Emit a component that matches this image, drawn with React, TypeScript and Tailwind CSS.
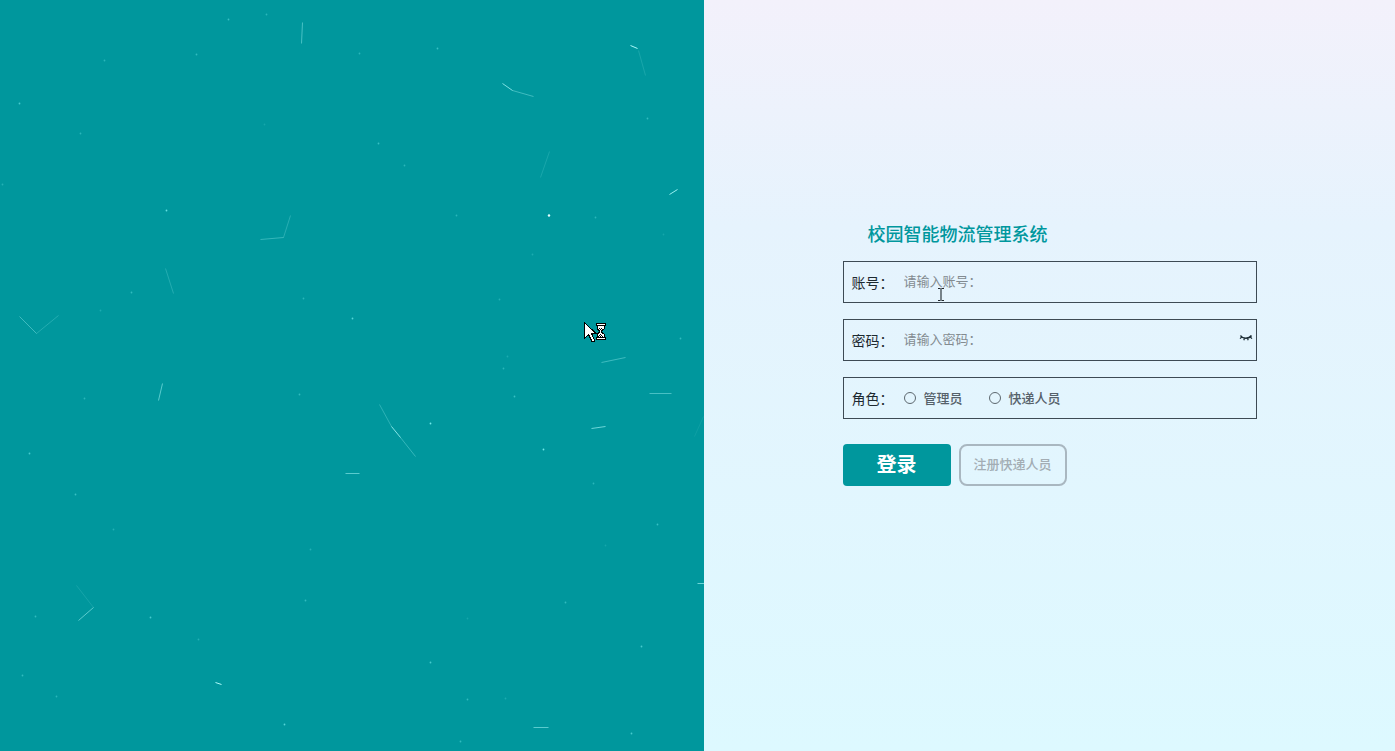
import { useState } from "react";

// [x, y, opacity]
const DOTS = [
  [228, 19, 0.4], [266, 14, 0.3], [104, 60, 0.3], [196, 54, 0.35], [359, 53, 0.3],
  [437, 48, 0.4], [19, 103, 0.5], [80, 133, 0.3], [378, 143, 0.4], [404, 165, 0.3],
  [264, 124, 0.15], [2, 184, 0.25], [166, 210, 0.7], [647, 118, 0.35], [456, 215, 0.3],
  [595, 217, 0.3], [663, 234, 0.15], [131, 292, 0.35], [100, 310, 0.2], [303, 298, 0.3],
  [352, 318, 0.6], [84, 398, 0.3], [299, 394, 0.35], [29, 453, 0.5], [75, 494, 0.4],
  [499, 299, 0.25], [532, 254, 0.2], [680, 338, 0.35], [507, 356, 0.2], [503, 368, 0.3],
  [514, 396, 0.4], [430, 423, 0.8], [543, 449, 0.8], [593, 483, 0.3], [657, 524, 0.4],
  [605, 545, 0.15], [113, 529, 0.25], [310, 549, 0.25], [305, 600, 0.35], [35, 616, 0.35],
  [150, 617, 0.5], [198, 639, 0.25], [22, 675, 0.35], [56, 696, 0.3], [284, 724, 0.6],
  [565, 602, 0.35], [467, 618, 0.15], [641, 646, 0.5], [430, 662, 0.5], [467, 699, 0.35],
  [505, 698, 0.2], [631, 733, 0.5], [460, 741, 0.35],
];

// [x1, y1, x2, y2, opacity]
const LINES = [
  [302, 22, 301, 43, 0.4], [260, 239, 283, 237, 0.3], [283, 237, 290, 215, 0.22],
  [502, 83, 512, 90, 0.7], [512, 90, 533, 96, 0.35], [630, 45, 637, 48, 0.95],
  [638, 50, 645, 75, 0.14], [540, 177, 549, 151, 0.14], [669, 194, 677, 189, 0.85],
  [165, 268, 173, 293, 0.2], [19, 316, 36, 333, 0.35], [36, 333, 58, 315, 0.2],
  [162, 383, 158, 400, 0.5], [379, 404, 391, 426, 0.25], [391, 426, 400, 437, 0.75],
  [400, 437, 415, 456, 0.3], [345, 473, 359, 473, 0.5], [601, 362, 625, 357, 0.35],
  [649, 393, 671, 393, 0.4], [591, 428, 605, 426, 0.6], [703, 416, 694, 436, 0.08],
  [76, 585, 93, 607, 0.12], [93, 607, 78, 620, 0.5], [215, 682, 221, 684, 0.95],
  [533, 727, 548, 727, 0.5], [697, 583, 704, 583, 0.6],
];

const HOURGLASS = [
  "##########",
  "#oooooooo#",
  "##########",
  ".#oooooo#.",
  ".#oooooo#.",
  ".#o#o#oo#.",
  ".##o#o##..",
  "..##o##...",
  "...#o#....",
  "..##o##...",
  ".##ooo##..",
  ".#oo#ooo#.",
  ".#o#o#oo#.",
  ".##o#o#o#.",
  "##########",
  "#oooooooo#",
  "##########",
];

function Particles() {
  return (
    <svg className="absolute inset-0 w-full h-full" aria-hidden="true">
      <g stroke="#b4ffff" fill="none">
        {LINES.map(([x1, y1, x2, y2, o], i) => (
          <line key={i} x1={x1 + 0.5} y1={y1 + 0.5} x2={x2 + 0.5} y2={y2 + 0.5} opacity={o} />
        ))}
      </g>
      <g fill="#8cffff">
        {DOTS.map(([x, y, o], i) => (
          <circle key={i} cx={x + 0.5} cy={y + 0.5} r="0.9" opacity={o} />
        ))}
        <circle cx="549" cy="215.5" r="1.2" fill="#e6ffff" />
      </g>
    </svg>
  );
}

function BusyCursor() {
  return (
    <svg
      className="absolute left-[584px] top-[321px]"
      width="24"
      height="22"
      viewBox="0 0 24 22"
      shapeRendering="crispEdges"
      aria-hidden="true"
    >
      <path d="M0.5 1.5V17.5L4.5 13.5L8 20.5H10L10.5 19L7.5 12.5H12Z" fill="#fff" stroke="#000" />
      {HOURGLASS.map((row, y) =>
        row.split("").map((p, x) =>
          p === "." ? null : (
            <rect
              key={`${x}-${y}`}
              x={x + 12}
              y={y + 2}
              width="1"
              height="1"
              fill={p === "#" ? "#000" : "#fff"}
            />
          )
        )
      )}
    </svg>
  );
}

function TextCursor() {
  return (
    <svg
      className="absolute left-[93px] top-[26px] pointer-events-none"
      width="8"
      height="13"
      viewBox="0 0 8 13"
      aria-hidden="true"
    >
      <path d="M1 0.5H3.5M4.5 0.5H7M1 12.5H3.5M4.5 12.5H7" stroke="#20262b" />
      <path d="M4 0.5V12.5" stroke="#3a444b" strokeWidth="1.3" />
    </svg>
  );
}

function ClosedEye() {
  return (
    <svg width="14" height="10" viewBox="0 0 14 10" fill="none" stroke="#1b2b33" aria-hidden="true">
      <path d="M1.5 2.5C3.5 6 10 6 12.5 2.5" strokeWidth="1.5" />
      <path d="M2.8 4L1 5.6M5.5 5.2L4.8 7.2M8.5 5.2L9.2 7.2M11.2 4L13 5.6" strokeWidth="1.2" />
    </svg>
  );
}

const rowClass = "relative flex items-center h-[42px] border border-[#3d4a54] pl-2";
const labelClass = "w-[52px] shrink-0 text-[14px] text-[#1d2930]";
const inputClass =
  "flex-1 min-w-0 h-full pb-1 bg-transparent text-[13px] text-[#303133] placeholder:text-[#838b90] outline-none";

export default function App() {
  const [account, setAccount] = useState("");
  const [password, setPassword] = useState("");
  const [showPassword, setShowPassword] = useState(false);
  const [role, setRole] = useState("");

  return (
    <div className="flex min-h-screen font-['Noto_Sans_CJK_SC',sans-serif]">
      <div className="relative w-[50.5%] overflow-hidden bg-[#00979d]">
        <Particles />
        <BusyCursor />
      </div>

      <div className="flex-1 flex items-center justify-center bg-linear-to-b from-[#f3f1fb] via-[#e6f3fd] via-30% to-[#ddf9ff]">
        <form onSubmit={(e) => e.preventDefault()} className="w-3/5 pb-[46px]">
          <h1 className="pl-[25px] mb-3.5 text-[18px] leading-7 font-medium text-[#00979d]">
            校园智能物流管理系统
          </h1>

          <div className="flex flex-col gap-4">
            <div className={rowClass}>
              <label htmlFor="account" className={labelClass}>账号：</label>
              <input
                id="account"
                type="text"
                placeholder="请输入账号："
                value={account}
                onChange={(e) => setAccount(e.target.value)}
                className={inputClass}
              />
              <TextCursor />
            </div>

            <div className={rowClass}>
              <label htmlFor="password" className={labelClass}>密码：</label>
              <input
                id="password"
                type={showPassword ? "text" : "password"}
                placeholder="请输入密码："
                value={password}
                onChange={(e) => setPassword(e.target.value)}
                className={inputClass}
              />
              <button
                type="button"
                aria-label="显示密码"
                onClick={() => setShowPassword(!showPassword)}
                className="px-[3px] pb-1"
              >
                <ClosedEye />
              </button>
            </div>

            <div role="radiogroup" aria-labelledby="role-label" className={rowClass}>
              <span id="role-label" className={labelClass}>角色：</span>
              <div className="flex items-center gap-[26px] text-[13px] font-medium text-[#56616a]">
                {["管理员", "快递人员"].map((name) => (
                  <label key={name} className="flex items-center gap-2">
                    <input
                      type="radio"
                      name="role"
                      value={name}
                      checked={role === name}
                      onChange={() => setRole(name)}
                      className="appearance-none size-3 rounded-full border border-[#5d686f] checked:border-4 checked:border-[#00979d]"
                    />
                    {name}
                  </label>
                ))}
              </div>
            </div>
          </div>

          <div className="flex gap-2 mt-[25px]">
            <button
              type="submit"
              className="w-[108px] h-[42px] pb-0.5 rounded bg-[#00979d] text-[20px] font-bold text-white"
            >
              登录
            </button>
            <button
              type="button"
              className="w-[108px] h-[42px] pb-0.5 rounded-lg border-2 border-[#a9b7c0] text-[13px] font-medium text-[#a3adb4]"
            >
              注册快递人员
            </button>
          </div>
        </form>
      </div>
    </div>
  );
}
